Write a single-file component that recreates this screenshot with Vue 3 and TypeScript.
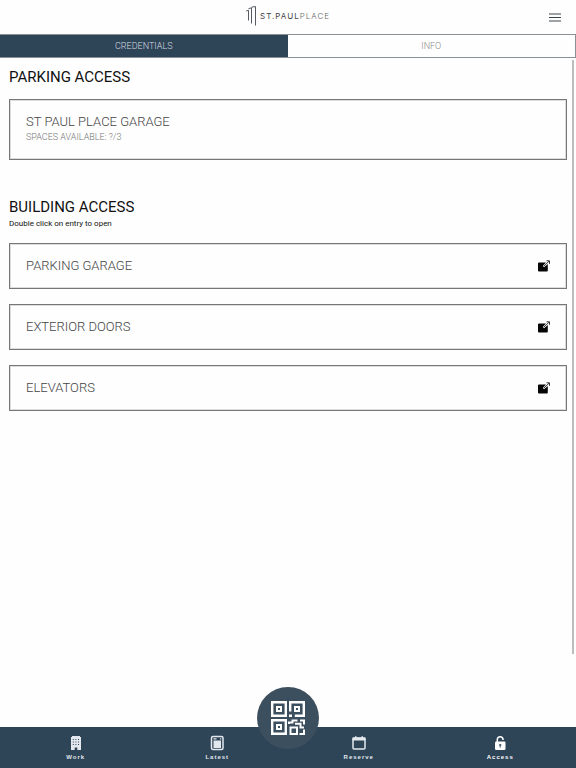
<script setup lang="ts">
import { ref } from 'vue'

type Tab = 'credentials' | 'info'
const tab = ref<Tab>('credentials')
const entries: string[] = ['PARKING GARAGE', 'EXTERIOR DOORS', 'ELEVATORS']
const links: { id: string; label: string }[] = [
  { id: 'work', label: 'Work' },
  { id: 'latest', label: 'Latest' },
  { id: 'reserve', label: 'Reserve' },
  { id: 'access', label: 'Access' },
]
</script>

<template>
  <div class="app">
    <header class="top">
      <a class="brand" href="#">
        <svg class="mark" viewBox="0 0 10 20" aria-hidden="true">
          <path d="M.2 5l2.300-.7v10.200M2.500 2.700l3-.9v15.700M5.500 1.200L9.500.5v19" />
        </svg>
        <span class="name"><strong>ST.PAUL</strong>PLACE</span>
      </a>
      <button class="menu" type="button" aria-label="Menu">
        <svg viewBox="0 0 12 9" aria-hidden="true"><path d="M0 1h12M0 4.500h12M0 8h12" /></svg>
      </button>
    </header>

    <div class="tabs" role="tablist">
      <button type="button" role="tab" :class="{ on: tab === 'credentials' }" :aria-selected="tab === 'credentials'" @click="tab = 'credentials'">CREDENTIALS</button>
      <button type="button" role="tab" :class="{ on: tab === 'info' }" :aria-selected="tab === 'info'" @click="tab = 'info'">INFO</button>
    </div>

    <main class="content">
      <section class="parking">
        <h2>PARKING ACCESS</h2>
        <article class="card garage">
          <h3>ST PAUL PLACE GARAGE</h3>
          <p>SPACES AVAILABLE: ?/3</p>
        </article>
      </section>
      <section>
        <h2>BUILDING ACCESS</h2>
        <p class="hint">Double click on entry to open</p>
        <div class="list">
          <button v-for="entry in entries" :key="entry" class="card entry" type="button">
            <span>{{ entry }}</span>
            <svg class="open" viewBox="0 0 12 12" aria-hidden="true">
              <path d="M1 2.500h7L4.800 6l1.200 1.200L9.800 4V10.500q0 1-1 1H1q-1 0-1-1V3.500q0-1 1-1z" />
              <path class="arrow" d="M5.800 6.200L11 1.200M8.500 .8h3v3" />
            </svg>
          </button>
        </div>
      </section>
    </main>

    <nav class="bottom">
      <a v-for="link in links" :key="link.id" href="#" :class="{ current: link.id === 'access' }">
        <svg v-if="link.id === 'work'" viewBox="0 0 16 16" aria-hidden="true">
          <path fill="currentColor" d="M4 1h8v1h1v13H9.300v-2.500H6.700V15H3V2h1z" />
          <path class="cut" d="M4.800 4.500h7M4.800 7h7M4.800 9.500h7" stroke-dasharray="1 1.600" />
        </svg>
        <svg v-else-if="link.id === 'latest'" viewBox="0 0 16 16" aria-hidden="true">
          <rect class="line" x="2.500" y="1.500" width="11.500" height="13" rx="1.500" />
          <path fill="currentColor" d="M4.500 5.500h7.500v7.500h-7.500zM4.500 3.300h3v1.200h-3zM11 3.300h1.200v1.200H11z" />
        </svg>
        <svg v-else-if="link.id === 'reserve'" viewBox="0 0 16 16" aria-hidden="true">
          <rect class="line" x="2" y="3" width="12" height="11" rx="1" />
          <path fill="currentColor" d="M1.500 2.500h13v3h-13zM4 1.200h1.500V3H4zM10.500 1.200H12V3h-1.500z" />
        </svg>
        <svg v-else viewBox="0 0 16 16" aria-hidden="true">
          <path class="line" d="M5.300 7V4.300a2.900 2.900 0 0 1 5.700-.3v1" />
          <rect x="3" y="6.500" width="10.500" height="8.500" rx="1.200" fill="currentColor" />
          <path class="key" d="M8.200 9v3.500M7 10h2.400" />
        </svg>
        <span>{{ link.label }}</span>
      </a>
      <button class="scan" type="button" aria-label="Show QR code">
        <svg viewBox="0 0 34 34" aria-hidden="true">
          <path class="frame" d="M1.200 1.200h13.600v13.600H1.200zM19.200 10.500V1.200h13.600v13.600h-9M18 14.800h3M1.200 19.200h13.600v13.600H1.200z" />
          <path class="dots" d="M6 6h4v4H6zM24 6h4v4h-4zM6 24h4v4H6z" />
          <path class="cells" d="M19.500 26.500h6.500v6.500h-6.500zM18 23v-1.500h3.500v-2h5M24 22.800h5.500v3.700h3.500M29 19.500h4v4M33 28.500V33h-4.500" />
        </svg>
      </button>
    </nav>
  </div>
</template>

<style>
body {
  background: #fefefe;
}
</style>

<style scoped>
* {
  box-sizing: border-box;
}
.app {
  display: flex;
  flex-direction: column;
  min-height: 100vh;
  color: #111;
  font-family: Roboto, "Liberation Sans", sans-serif;
}
button {
  margin: 0;
  padding: 0;
  border: 0;
  background: none;
  color: inherit;
  font: inherit;
}
a {
  color: inherit;
  text-decoration: none;
}
svg {
  display: block;
  fill: none;
}
h2,
h3,
p {
  margin: 0;
  font-weight: 300;
}
.top {
  display: grid;
  grid-template-columns: 1fr auto 1fr;
  align-items: center;
  height: 34px;
  padding: 0 15px;
}
.brand {
  grid-column: 2;
  display: flex;
  align-items: center;
  gap: 4px;
  height: 32px;
  align-self: start;
}
.mark {
  width: 10px;
  height: 20px;
  stroke: #555b60;
}
.name {
  color: #666;
  font: 300 8px/10px Inter, sans-serif;
  letter-spacing: 1px;
}
.name strong {
  color: #444;
  font-weight: 400;
}
.menu {
  justify-self: end;
}
.menu svg {
  width: 12px;
  height: 9px;
  stroke: #3c4650;
}
.tabs {
  display: grid;
  grid-template-columns: 1fr 1fr;
  height: 24px;
  border: 1px solid #8b9095;
  border-left: 0;
}
.tabs button {
  color: #8b8b8b;
  font-size: 9px;
  font-weight: 300;
}
.tabs .on {
  background: #2e4457;
  color: #d5dbe0;
}
.content {
  flex: 1;
  margin: 2px 2px 73px 0;
  padding: 7px 5px 16px 9px;
  border-right: 2px solid #bdbdbd;
}
.parking {
  margin-bottom: 37px;
}
h2 {
  font-size: 15px;
  font-weight: 400;
  line-height: 20px;
}
.card {
  width: 100%;
  border: 1px solid #777;
  box-shadow: inset 0 0 0 1px #ddd;
  color: #444;
  text-align: left;
}
.garage {
  margin-top: 12px;
  padding: 14px 16px 15px;
}
h3,
.entry {
  font-size: 13px;
  font-weight: 300;
  line-height: 16px;
}
.garage p {
  color: #777;
  font-size: 9px;
  line-height: 14px;
}
.hint {
  font-size: 8px;
  font-weight: 400;
  line-height: 13px;
}
.list {
  display: grid;
  gap: 15px;
  margin-top: 13px;
}
.entry {
  display: flex;
  align-items: center;
  justify-content: space-between;
  height: 46px;
  padding: 0 16px;
}
.open {
  width: 12px;
  height: 12px;
  fill: #050505;
}
.arrow {
  fill: none;
  stroke: #333;
}
.bottom {
  position: relative;
  display: grid;
  grid-template-columns: repeat(4, 1fr);
  height: 41px;
  padding: 0 5px;
  background: #2e4457;
  color: #eef2f5;
}
.bottom a {
  display: flex;
  flex-direction: column;
  align-items: center;
  padding-top: 8px;
  font: 700 6px/8px "Liberation Sans", sans-serif;
  letter-spacing: 1px;
  color: #e2e8ed;
}
.bottom .current {
  color: #fff;
}
.bottom a svg {
  width: 16px;
  height: 16px;
  margin-bottom: 2px;
}
.line {
  stroke: currentColor;
  stroke-width: 1.5px;
}
.cut,
.key {
  stroke: #2e4457;
}
.scan {
  position: absolute;
  top: -40px;
  left: 50%;
  display: grid;
  place-items: center;
  width: 62px;
  height: 62px;
  border-radius: 50%;
  background: #3c4f5e;
  transform: translateX(-50%);
}
.scan svg {
  width: 34px;
  height: 34px;
}
.frame {
  stroke: #fff;
  stroke-width: 2.4px;
}
.dots,
.cells {
  stroke: #fff;
  stroke-width: 2px;
}
</style>
